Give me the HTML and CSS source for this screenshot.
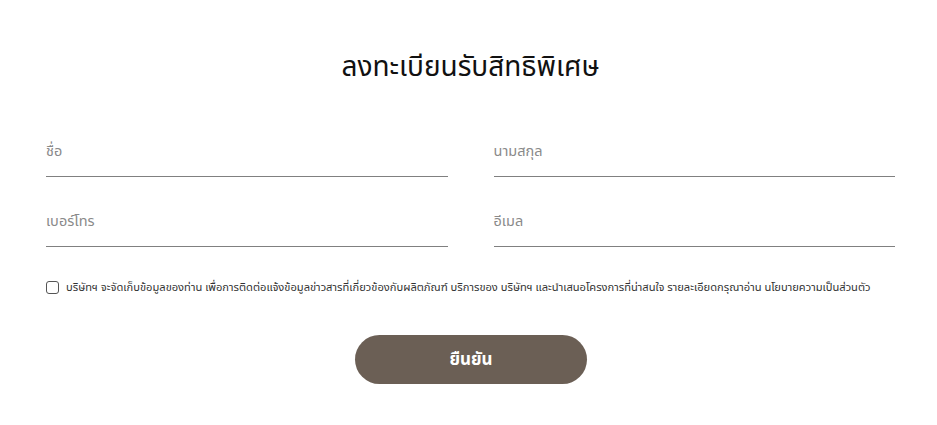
FILE: index.html
```html
<!DOCTYPE html>
<html lang="th">
<head>
<meta charset="utf-8">
<link rel="stylesheet" href="styles.css">
</head>
<body>
<form class="register">
  <h1 class="title">ลงทะเบียนรับสิทธิพิเศษ</h1>
  <div class="grid">
    <label class="field"><span class="ph">ชื่อ</span></label>
    <label class="field"><span class="ph">นามสกุล</span></label>
    <label class="field"><span class="ph">เบอร์โทร</span></label>
    <label class="field"><span class="ph">อีเมล</span></label>
  </div>
  <label class="consent">
    <span class="box"></span>
    <span class="consent-text">บริษัทฯ จะจัดเก็บข้อมูลของท่าน เพื่อการติดต่อแจ้งข้อมูลข่าวสารที่เกี่ยวข้องกับผลิตภัณฑ์ บริการของ บริษัทฯ และนำเสนอโครงการที่น่าสนใจ รายละเอียดกรุณาอ่าน นโยบายความเป็นส่วนตัว</span>
  </label>
  <div class="actions">
    <button type="button" class="submit">ยืนยัน</button>
  </div>
</form>
</body>
</html>
```
FILE: styles.css
```css
* { box-sizing: border-box; }
html, body { margin: 0; background: #fff; }
body {
  font-family: "Noto Sans Thai", "Noto Sans Thai Looped", "Noto Sans", sans-serif;
  color: #1a1a1a;
}
.register {
  width: 849px;
  margin: 0 0 0 46px;
  padding-top: 46px;
}
.title {
  margin: 0;
  text-align: center;
  font-size: 28px;
  font-weight: 400;
  line-height: 44px;
  color: #111;
}
.grid {
  margin-top: 37px;
  display: grid;
  grid-template-columns: 1fr 1fr;
  column-gap: 46px;
  row-gap: 20px;
}
.field {
  display: block;
  height: 50px;
  border-bottom: 1px solid #808080;
  padding-top: 12px;
}
.ph {
  font-size: 14.5px;
  color: #8a8a8a;
  line-height: 20px;
}
.consent {
  display: flex;
  align-items: center;
  gap: 7px;
  margin-top: 32px;
}
.box {
  width: 13px;
  height: 13px;
  border: 1px solid #555;
  border-radius: 3px;
  flex: none;
}
.consent-text {
  font-size: 11.15px;
  color: #333;
  white-space: nowrap;
}
.actions {
  display: flex;
  justify-content: center;
  margin-top: 39px;
  padding-left: 1px;
}
.submit {
  width: 232px;
  height: 49px;
  border: 0;
  border-radius: 25px;
  background: #6b5f55;
  color: #fff;
  font-family: inherit;
  font-size: 17px;
  font-weight: 700;
}
```
